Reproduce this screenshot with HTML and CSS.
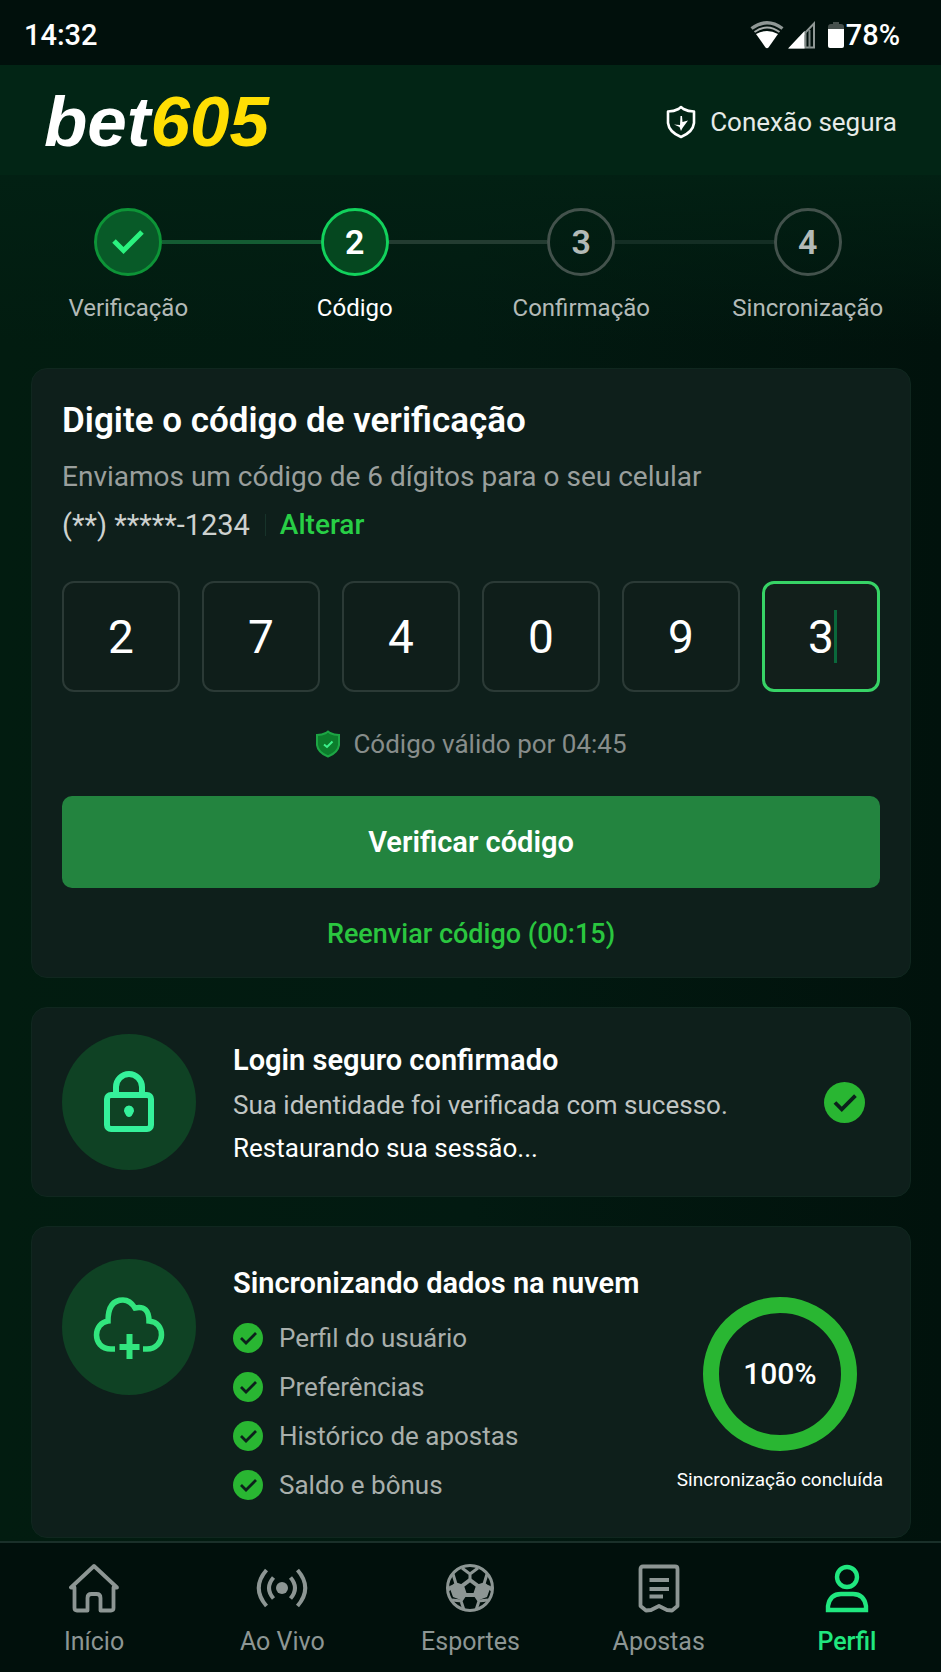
FILE: index.html
```html
<!DOCTYPE html>
<html lang="pt-BR">
<head>
<meta charset="utf-8">
<meta name="viewport" content="width=device-width, initial-scale=1">
<title>bet605 – Verificação</title>
<link rel="stylesheet" href="styles.css">
</head>
<body>
<div class="app">
  <div class="statusbar">
    <span>14:32</span>
    <div class="statusbar-icons">
      <svg width="34" height="28" viewBox="0 0 34 28" aria-hidden="true">
        <path d="M1.500 7.500Q17 -4 32.500 7.500" fill="none" stroke="#8f9795" stroke-width="3.400"/>
        <path d="M4.500 11Q17 2 29.500 11" fill="none" stroke="#a7adab" stroke-width="2"/>
        <path d="M6 13Q17 7 28 13L18.500 26.500Q17 28 15.500 26.500Z" fill="#fff"/>
      </svg>
      <svg class="signal" width="28" height="28" viewBox="0 0 28 28" aria-hidden="true">
        <path d="M26 2.500V26.500H3Z" fill="none" stroke="#8f9795" stroke-width="2"/>
        <path d="M17.500 10V27M21.500 9V27" stroke="#7f8885" stroke-width="2"/>
        <path d="M0 27.500L16.500 10V27.500Z" fill="#fff"/>
      </svg>
      <svg class="battery" width="16" height="28" viewBox="0 0 16 28" aria-hidden="true">
        <path d="M5 1h6v2h2q3 0 3 3v3H0V6q0-3 3-3h2Z" fill="#46504d"/>
        <path d="M0 8H16V25q0 2-2 2H2q-2 0-2-2Z" fill="#fff"/>
      </svg>
      <span>78%</span>
    </div>
  </div>

  <header class="header">
    <div class="logo">bet<span class="logo-number">605</span></div>
    <div class="secure">
      <svg width="30" height="34" viewBox="0 0 30 34" fill="none" aria-hidden="true">
        <path d="M15 2L17.500 4Q22 6.500 28 6.500V18Q27 27 15 32Q3 27 2 18V6.500Q8 6.500 12.500 4Z" stroke="#fff" stroke-width="2.600" stroke-linejoin="round"/>
        <path d="M14.500 11L16 11L16.500 17L22 15.500L16.500 23L15 26L13.500 22L8 19.500L14 20Z" fill="#fff"/>
      </svg>
      <span>Conexão segura</span>
    </div>
  </header>

  <ol class="steps">
    <li class="step step-done">
      <div class="step-track"><span class="step-marker">
        <svg width="34" height="28" viewBox="0 0 34 28" fill="none" aria-hidden="true"><path d="M3 13L12.500 22.500L31 4" stroke="#2bf27f" stroke-width="5"/></svg>
      </span></div>
      <span>Verificação</span>
    </li>
    <li class="step step-current" aria-current="step">
      <div class="step-track"><span class="step-marker">2</span></div>
      <span>Código</span>
    </li>
    <li class="step step-next">
      <div class="step-track"><span class="step-marker">3</span></div>
      <span>Confirmação</span>
    </li>
    <li class="step step-last">
      <div class="step-track"><span class="step-marker">4</span></div>
      <span>Sincronização</span>
    </li>
  </ol>

  <main class="content">
    <form class="card verify">
      <h1 class="verify-title">Digite o código de verificação</h1>
      <p class="verify-text">Enviamos um código de 6 dígitos para o seu celular</p>
      <p class="verify-phone"><span>(**) *****-1234</span><a class="change" href="#">Alterar</a></p>
      <div class="code">
        <input class="digit" aria-label="Dígito 1" inputmode="numeric" maxlength="1" value="2">
        <input class="digit" aria-label="Dígito 2" inputmode="numeric" maxlength="1" value="7">
        <input class="digit" aria-label="Dígito 3" inputmode="numeric" maxlength="1" value="4">
        <input class="digit" aria-label="Dígito 4" inputmode="numeric" maxlength="1" value="0">
        <input class="digit" aria-label="Dígito 5" inputmode="numeric" maxlength="1" value="9">
        <div class="digit-active">
          <input class="digit" aria-label="Dígito 6" inputmode="numeric" maxlength="1" value="3">
          <span class="caret"></span>
        </div>
      </div>
      <p class="validity">
        <svg width="26" height="28" viewBox="0 0 26 28" fill="none" aria-hidden="true">
          <path d="M13 1.500L15 3Q19 5 24 5V15Q23 22.500 13 26.500Q3 22.500 2 15V5Q7 5 11 3Z" fill="#0c7d2c" stroke="#1da544" stroke-width="2"/>
          <path d="M9 14.500L12 17L17.500 11.500" stroke="#3df08a" stroke-width="2"/>
        </svg>
        <span>Código válido por 04:45</span>
      </p>
      <button class="submit" type="button">Verificar código</button>
      <button class="resend" type="button">Reenviar código (00:15)</button>
    </form>

    <section class="card login">
      <div class="badge">
        <svg width="54" height="64" viewBox="0 0 54 64" fill="none" stroke="#35f19b" aria-hidden="true">
          <path d="M14 24V17a13 13 0 0 1 26 0V24" stroke-width="6"/>
          <rect x="5" y="25" width="44" height="34" rx="4" stroke-width="6"/>
          <path d="M27 35.500a5 5 0 0 1 4 8L29.500 46q-2.500 2-5 0L23 43.500a5 5 0 0 1 4-8Z" fill="#35f19b" stroke="none"/>
        </svg>
      </div>
      <div class="login-text">
        <h2 class="card-title">Login seguro confirmado</h2>
        <p class="login-line">Sua identidade foi verificada com sucesso.</p>
        <p class="login-line login-strong">Restaurando sua sessão...</p>
      </div>
      <svg width="41" height="41" viewBox="0 0 30 30" fill="none" aria-hidden="true"><circle cx="15" cy="15" r="15" fill="#29b632"/><path d="M8 15L13 20L23 10" stroke="#0c211b" stroke-width="2.800"/></svg>
    </section>

    <section class="card sync">
      <div class="badge">
        <svg width="72" height="66" viewBox="0 0 72 66" fill="none" stroke="#32e57e" aria-hidden="true">
          <path d="M22 55H18C8 55 3.500 48 3.500 41S8 28 15 27C15 12 21 6 30 6Q37 6 42 14Q56 11 56 27C65 28 68.500 34 68.500 41S63 55 54 55H50" stroke-width="5.500"/>
          <path d="M36.500 40V65M26.500 53H46.500" stroke-width="6"/>
        </svg>
      </div>
      <div class="sync-body">
        <h2 class="card-title">Sincronizando dados na nuvem</h2>
        <ul class="sync-list">
          <li><svg width="30" height="30" viewBox="0 0 30 30" fill="none" aria-hidden="true"><circle cx="15" cy="15" r="15" fill="#29b632"/><path d="M8 15L13 20L23 10" stroke="#0c211b" stroke-width="2.800"/></svg>Perfil do usuário</li>
          <li><svg width="30" height="30" viewBox="0 0 30 30" fill="none" aria-hidden="true"><circle cx="15" cy="15" r="15" fill="#29b632"/><path d="M8 15L13 20L23 10" stroke="#0c211b" stroke-width="2.800"/></svg>Preferências</li>
          <li><svg width="30" height="30" viewBox="0 0 30 30" fill="none" aria-hidden="true"><circle cx="15" cy="15" r="15" fill="#29b632"/><path d="M8 15L13 20L23 10" stroke="#0c211b" stroke-width="2.800"/></svg>Histórico de apostas</li>
          <li><svg width="30" height="30" viewBox="0 0 30 30" fill="none" aria-hidden="true"><circle cx="15" cy="15" r="15" fill="#29b632"/><path d="M8 15L13 20L23 10" stroke="#0c211b" stroke-width="2.800"/></svg>Saldo e bônus</li>
        </ul>
      </div>
      <div class="progress">
        <div class="ring">100%</div>
        <span class="progress-label">Sincronização concluída</span>
      </div>
    </section>
  </main>

  <nav class="tabs">
    <a class="tab" href="#">
      <svg width="50" height="50" viewBox="0 0 50 50" fill="none" stroke="#8d9694" stroke-width="3.800" stroke-linejoin="round" aria-hidden="true"><path d="M2 24.500H5.500V45Q5.500 47.500 8 47.500H18.500V35Q18.500 31 22.500 31H27.500Q31.500 31 31.500 35V47.500H42Q44.500 47.500 44.500 45V24.500H48L25 3Z"/></svg>
      <span>Início</span>
    </a>
    <a class="tab" href="#">
      <svg width="52" height="50" viewBox="0 0 52 50" fill="none" stroke="#8d9694" stroke-width="4" aria-hidden="true"><circle cx="26" cy="25" r="6" fill="#8d9694" stroke="none"/><path d="M17.500 14.500Q8.500 25 17.500 35.500M34.500 14.500Q43.500 25 34.500 35.500M10.500 7Q-5 25 10.500 43M41.500 7Q57 25 41.500 43"/></svg>
      <span>Ao Vivo</span>
    </a>
    <a class="tab" href="#">
      <svg width="50" height="50" viewBox="0 0 50 50" fill="none" stroke="#8d9694" stroke-width="3" aria-hidden="true"><circle cx="25" cy="25" r="22.500"/><path d="M25 17L33 23L30 32H20L17 23Z" stroke-width="4"/><path d="M25 17V11L17 5M25 11L33 5M33 23L39 21L42 11M39 21L47 27M30 32L34 38L43 37M34 38L31 47M20 32L16 38L7 37M16 38L19 47M17 23L11 21L8 11M11 21L3 27"/><path d="M4 23L12 21L17 24L20 33L16 37L8 34ZM46 23L38 21L33 24L30 33L34 37L42 34Z" fill="#8d9694" stroke="none"/></svg>
      <span>Esportes</span>
    </a>
    <a class="tab" href="#">
      <svg width="50" height="50" viewBox="0 0 50 50" fill="none" stroke="#8d9694" stroke-width="3.800" stroke-linejoin="round" aria-hidden="true"><path d="M9 3.500H41Q43.500 3.500 43.500 6V43L38 47.500L33 47L25 43L17 47L12 47.500L6.500 43V6Q6.500 3.500 9 3.500Z"/><path d="M15.500 17H35M15.500 26H35M15.500 33.500H29"/></svg>
      <span>Apostas</span>
    </a>
    <a class="tab tab-active" href="#" aria-current="page">
      <svg width="50" height="50" viewBox="0 0 50 50" fill="none" stroke="#20e77f" stroke-width="4.400" aria-hidden="true"><circle cx="25" cy="14" r="10"/><path d="M6 47V43Q8 31 19 31H31Q42 31 44 43V47Z"/></svg>
      <span>Perfil</span>
    </a>
  </nav>
</div>
</body>
</html>
```
FILE: styles.css
```css
* { box-sizing: border-box; }

body {
  margin: 0;
  background: #01150e;
  color: #fff;
  font-family: Roboto, "Liberation Sans", sans-serif;
  font-size: 26px;
  line-height: 32px;
}

h1, h2, p, ul, ol { margin: 0; padding: 0; }
ul, ol { list-style: none; }
a { text-decoration: none; }
button { border: 0; font-family: inherit; }
svg { display: block; flex: none; }

.app {
  display: flex;
  flex-direction: column;
  min-height: 100vh;
  background: linear-gradient(90deg, #021c10, #021a11 50%, #01120c);
}

.statusbar {
  display: flex;
  align-items: center;
  justify-content: space-between;
  height: 65px;
  padding: 5px 41px 0 24px;
  background: #01100c;
  font-size: 29px;
  font-weight: 500;
}

.statusbar-icons { display: flex; align-items: center; }
.signal { margin-left: 4px; }
.battery { margin: 0 2px 0 12px; }

.header {
  display: flex;
  align-items: center;
  justify-content: space-between;
  height: 110px;
  padding: 4px 44px 0;
  background: #022515;
}

.logo {
  font-family: "Liberation Sans", sans-serif;
  font-size: 71px;
  font-style: italic;
  font-weight: 700;
  line-height: 72px;
}

.logo-number { color: #ffde03; }

.secure {
  display: flex;
  align-items: center;
  gap: 14px;
  color: #e6ebe8;
}

.steps {
  display: grid;
  grid-template-columns: repeat(4, 1fr);
  padding: 33px 20px 19px 15px;
  background: linear-gradient(#022013, #021f1200);
  color: #b3bab7;
  font-size: 24px;
  text-align: center;
}

.step-track {
  display: flex;
  align-items: center;
  margin-bottom: 16px;
}

.step-track::before,
.step-track::after {
  content: "";
  flex: 1;
  height: 4px;
}

.step:first-child .step-track::before,
.step:last-child .step-track::after { background: none; }

.step-marker {
  display: flex;
  align-items: center;
  justify-content: center;
  width: 68px;
  height: 68px;
  border: 3px solid #43524c;
  border-radius: 50%;
  font-size: 34px;
  font-weight: 600;
}

.step-done .step-marker { border-color: #0d9437; background: #085a28; }
.step-done .step-track::after,
.step-current .step-track::before { background: #145c33; }
.step-current { color: #fff; }
.step-current .step-marker { border-color: #12d25c; background: #05471f; }
.step-current .step-track::after,
.step-next .step-track::before { background: #233c31; }
.step-next .step-track::after,
.step-last .step-track::before { background: #142e24; }

.content {
  display: flex;
  flex: 1;
  flex-direction: column;
  gap: 29px;
  padding: 25px 30px 1px 31px;
}

.card {
  border: 1px solid #10271f;
  border-radius: 16px;
  background: #0e1f1b;
}

.verify {
  display: flex;
  flex-direction: column;
  padding: 32px 30px 27px;
}

.verify-title {
  font-size: 35px;
  font-weight: 600;
  line-height: 40px;
}

.verify-text,
.verify-phone {
  font-size: 28px;
  line-height: 48px;
}

.verify-text { margin-top: 12px; color: #9a9f9d; }

.verify-phone {
  display: flex;
  align-items: center;
  color: #cdd1cf;
  font-size: 29px;
}

.change {
  margin-left: 15px;
  padding-left: 14px;
  border-left: 1px solid #17332a;
  color: #28cf46;
  font-size: 28px;
  font-weight: 500;
  line-height: 22px;
}

.code {
  display: grid;
  grid-template-columns: repeat(6, 1fr);
  gap: 22px;
  margin-top: 32px;
}

.digit {
  width: 100%;
  height: 111px;
  padding: 0;
  border: 2px solid #2b3a36;
  border-radius: 12px;
  outline: 0;
  background: #0f1e1a;
  color: #fff;
  font-family: inherit;
  font-size: 46px;
  text-align: center;
}

.digit-active { position: relative; }
.digit-active .digit { border: 3px solid #37d366; background: #121f1b; }

.caret {
  position: absolute;
  top: 29px;
  left: calc(50% + 13px);
  width: 3px;
  height: 53px;
  background: #0a683b;
}

.validity {
  display: flex;
  align-items: center;
  justify-content: center;
  gap: 12px;
  margin-top: 36px;
  color: #878d8b;
}

.submit {
  height: 92px;
  margin-top: 36px;
  border-radius: 10px;
  background: #23843f;
  color: #fff;
  font-size: 29px;
  font-weight: 600;
}

.resend {
  align-self: center;
  margin-top: 30px;
  padding: 0;
  background: none;
  color: #2ac63f;
  font-size: 27px;
  font-weight: 500;
  line-height: 32px;
}

.badge {
  display: flex;
  align-items: center;
  justify-content: center;
  flex: none;
  width: 134px;
  height: 136px;
  border-radius: 50%;
  background: #0f4224;
}

.card-title {
  font-size: 29px;
  font-weight: 600;
  line-height: 36px;
}

.login {
  display: flex;
  align-items: center;
  padding: 26px 45px 26px 30px;
}

.login-text { flex: 1; margin: 8px 0 0 37px; }
.login-line { color: #c0c5c3; line-height: 43px; }
.card-title + .login-line { margin-top: 6px; }
.login-strong { color: #fff; }

.sync {
  display: flex;
  align-items: flex-start;
  padding: 32px 27px 28px 30px;
}

.sync-body { flex: 1; margin: 6px 0 0 37px; }
.sync-list { margin-top: 12px; color: #a9afac; }

.sync-list li {
  display: flex;
  align-items: center;
  gap: 16px;
  height: 49px;
}

.progress {
  display: flex;
  flex-direction: column;
  align-items: center;
  gap: 15px;
  margin-top: 38px;
}

.ring {
  display: flex;
  align-items: center;
  justify-content: center;
  width: 154px;
  height: 154px;
  border: 16px solid #29b632;
  border-radius: 50%;
  font-size: 30px;
  font-weight: 500;
}

.progress-label { font-size: 19px; line-height: 28px; }

.tabs {
  display: grid;
  grid-template-columns: repeat(5, 1fr);
  height: 131px;
  border-top: 2px solid #1a302a;
  background: #01100c;
}

.tab {
  display: flex;
  flex-direction: column;
  align-items: center;
  gap: 13px;
  padding-top: 20px;
  color: #8d9694;
  font-size: 25px;
}

.tab-active { color: #20e77f; font-weight: 500; }
```
